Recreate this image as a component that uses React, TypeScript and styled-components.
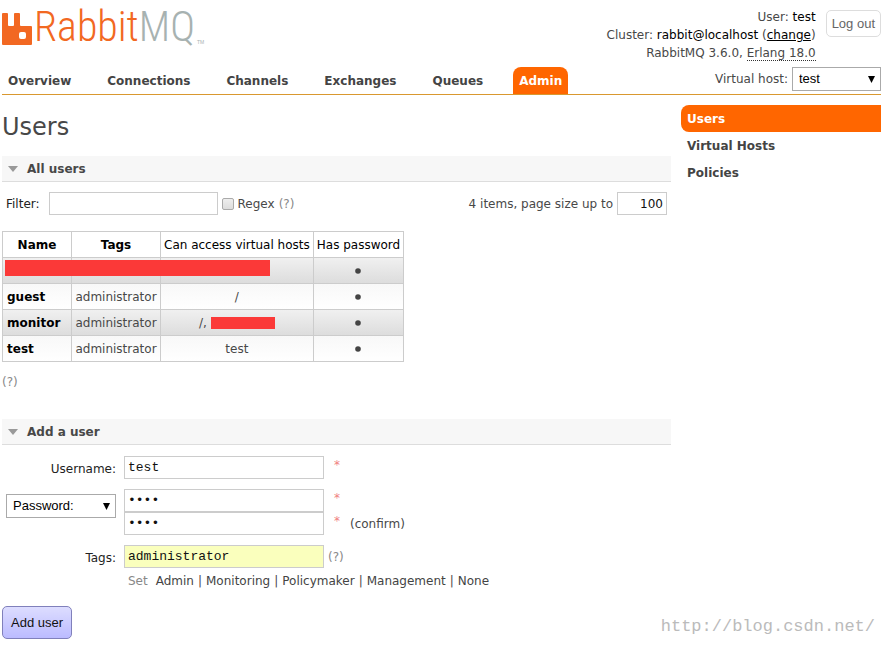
import React from "react";
import styled, { createGlobalStyle, css } from "styled-components";

const GlobalStyle = createGlobalStyle`
  * { box-sizing: border-box; }
  body {
    margin: 0;
    background: #fff;
    color: #484848;
    font: 12px/18px Verdana, "DejaVu Sans", sans-serif;
  }
  a { color: #444; text-decoration: none; }
`;

const Page = styled.div`
  position: relative;
  padding: 0 4px 8px 2px;
`;

const Header = styled.header`
  display: flex;
  justify-content: space-between;
  align-items: flex-end;
  border-bottom: 1px solid #d9982f;
`;

const Brand = styled.div`
  display: flex;
  flex-direction: column;
  gap: 16px;
`;

const Logo = styled.a`
  display: flex;
  align-items: flex-start;
`;

const Mark = styled.svg`
  display: block;
  width: 30px;
  height: 32px;
  margin: 13px 2px 0 0;
`;

const Wordmark = styled.span`
  margin-top: 3px;
  font: 300 42px/48px "Roboto Condensed", Roboto, sans-serif;
  color: #f26822;
`;

const WordmarkTail = styled.span`
  color: #a7b2b1;
`;

const TradeMark = styled.span`
  font: 5px/8px "Liberation Sans", sans-serif;
  color: #a7b2b1;
  margin: 38px 0 0 2px;
`;

const Tabs = styled.nav`
  display: flex;
  gap: 24px;
`;

const Tab = styled.a<{ $active?: boolean }>`
  padding: 5px 6px 4px;
  font-weight: bold;
  border-radius: 8px 8px 0 0;
  ${(p) => p.$active && css`
    background: #f60;
    color: #fff;
  `}
`;

const Session = styled.div`
  display: flex;
  flex-direction: column;
  align-items: flex-end;
  gap: 5px;
  padding: 8px 0 3px;
`;

const SessionTop = styled.div`
  display: flex;
  align-items: flex-start;
  gap: 10px;
`;

const Facts = styled.div`
  text-align: right;
`;

const Strong = styled.span`
  color: #000;
`;

const ChangeLink = styled.a`
  color: #000;
  text-decoration: underline;
`;

const Version = styled.abbr`
  text-decoration: none;
  border-bottom: 1px dotted #333;
`;

const LogOut = styled.button`
  margin-top: 2px;
  height: 27px;
  padding: 0 5px;
  border: 1px solid #ddd;
  border-radius: 5px;
  background: #fff;
  color: #666;
  font: 13px/18px "Liberation Sans", Arial, sans-serif;
`;

const HostRow = styled.label`
  display: flex;
  align-items: center;
  gap: 4px;
`;

const SelectBox = styled.span<{ $width: number }>`
  display: grid;
  align-items: center;
  width: ${(p) => p.$width}px;
`;

const Select = styled.select`
  grid-area: 1 / 1;
  appearance: none;
  width: 100%;
  height: 24px;
  padding: 0 6px;
  border: 1px solid #aaa;
  border-radius: 0;
  background: #fff;
  color: #000;
  font: 13px/18px "Liberation Sans", Arial, sans-serif;
`;

const Arrow = styled.svg`
  grid-area: 1 / 1;
  justify-self: end;
  margin-right: 6px;
  width: 7px;
  height: 7px;
  pointer-events: none;
`;

const Body = styled.div`
  display: flex;
  align-items: flex-start;
  gap: 10px;
`;

const Main = styled.main`
  flex: 1;
  min-width: 0;
`;

const Side = styled.nav`
  display: flex;
  flex-direction: column;
  width: 200px;
  margin-top: 10px;
`;

const SideLink = styled.a<{ $active?: boolean }>`
  padding: 5px 6px 4px;
  font-weight: bold;
  border-radius: 8px 0 0 8px;
  ${(p) => p.$active && css`
    background: #f60;
    color: #fff;
  `}
`;

const Title = styled.h1`
  margin: 18px 0 14px;
  font-size: 24px;
  line-height: 29px;
  font-weight: normal;
`;

const SectionTitle = styled.h2`
  display: flex;
  align-items: center;
  gap: 9px;
  margin: 0;
  padding: 4px 6px 3px;
  background: #f7f7f7;
  border-bottom: 1px solid #ddd;
  font-size: 12px;
  line-height: 18px;
`;

const Caret = styled.svg`
  width: 10px;
  height: 6px;
`;

const FilterBar = styled.div`
  display: flex;
  align-items: center;
  padding: 10px 4px 16px;
`;

const FilterLabel = styled.label`
  display: flex;
  align-items: center;
  gap: 9px;
  color: #222;
`;

const field = css`
  height: 23px;
  padding: 2px 3px;
  border: 1px solid #ccc;
  border-radius: 0;
  background: #fff;
  color: #111;
`;

const FilterInput = styled.input`
  ${field}
  width: 169px;
  font: 13px/16px "Liberation Mono", monospace;
`;

const RegexLabel = styled.label`
  display: flex;
  align-items: center;
  gap: 4px;
  margin: 0 4px;
`;

const Check = styled.input`
  appearance: none;
  width: 12px;
  height: 12px;
  margin: 0;
  border: 1px solid #aaa;
  border-radius: 2px;
  background: linear-gradient(#eee, #ddd);
`;

const Help = styled.span`
  color: #888;
`;

const PageSize = styled.label`
  display: flex;
  align-items: center;
  gap: 4px;
  margin-left: auto;
`;

const SizeInput = styled.input`
  ${field}
  width: 50px;
  text-align: right;
  font: 12px/16px Verdana, "DejaVu Sans", sans-serif;
`;

const Table = styled.table`
  border-collapse: collapse;
  margin-bottom: 11px;
`;

const Row = styled.tr<{ $shaded?: boolean }>`
  background: ${(p) =>
    p.$shaded
      ? "linear-gradient(#f0f0f0, #dcdcdc)"
      : "linear-gradient(#f8f8f8, #fff)"};
`;

const Heading = styled.th<{ $plain?: boolean; $min?: number }>`
  min-width: ${(p) => p.$min ?? 0}px;
  padding: 4px 3px 3px;
  border: 1px solid #ccc;
  color: #000;
  font-weight: ${(p) => (p.$plain ? "normal" : "bold")};
`;

const Cell = styled.td<{ $left?: boolean }>`
  height: 26px;
  padding: 4px 3px 3px;
  border: 1px solid #ccc;
  text-align: center;
  ${(p) => p.$left && css`
    padding-left: 4px;
    text-align: left;
  `}
`;

const NameLink = styled.a`
  color: #000;
  font-weight: bold;
`;

const RowBlock = styled.span`
  position: absolute;
  left: 2px;
  top: 2px;
  width: 265px;
  height: 16px;
  background: #fb3938;
`;

const RedactedCell = styled(Cell)`
  position: relative;
`;

const InlineBlock = styled.span`
  display: inline-block;
  width: 64px;
  height: 12px;
  vertical-align: -2px;
  background: #fb3938;
`;

const Dot = styled.svg`
  width: 6px;
  height: 6px;
  vertical-align: 1px;
`;

const AddSection = styled.section`
  margin-top: 28px;
`;

const Form = styled.form`
  padding-top: 11px;
`;

const Fields = styled.div`
  display: grid;
  grid-template-columns: 110px auto;
  justify-content: start;
  column-gap: 8px;
  row-gap: 10px;
  padding-left: 4px;
`;

const FieldLabel = styled.label`
  padding-top: 4px;
  text-align: right;
  color: #222;
`;

const PasswordKind = styled.div`
  padding-top: 5px;
`;

const Line = styled.div`
  display: flex;
  align-items: center;
`;

const TextInput = styled.input<{ $filled?: boolean }>`
  ${field}
  width: 200px;
  background: ${(p) => (p.$filled ? "#faffbd" : "#fff")};
  font: 13px/16px "Liberation Mono", monospace;
`;

const Required = styled.span`
  align-self: flex-start;
  width: 26px;
  padding-left: 10px;
  color: #f08080;
`;

const TagHelp = styled(Help)`
  padding-left: 4px;
`;

const SetRow = styled.div`
  display: flex;
  gap: 4px;
  padding: 4px 0 0 4px;
`;

const SetLabel = styled.span`
  margin-right: 4px;
  color: #888;
`;

const AddButton = styled.button`
  margin-top: 16px;
  height: 33px;
  padding: 0 8px;
  border: 1px solid #8080bb;
  border-radius: 5px;
  background: linear-gradient(#ddf, #bbf);
  color: #111;
  font: 13px/18px "Liberation Sans", Arial, sans-serif;
`;

const Watermark = styled.div`
  position: absolute;
  right: 10px;
  bottom: 8px;
  font: 17px/24px "Liberation Mono", monospace;
  color: #bbb;
`;

const tabs = ["Overview", "Connections", "Channels", "Exchanges", "Queues", "Admin"];
const sideLinks = ["Users", "Virtual Hosts", "Policies"];
const tagPresets = ["Admin", "Monitoring", "Policymaker", "Management", "None"];
const users = [
  { name: "guest", hosts: "/" },
  { name: "monitor", hosts: "/, ", hidden: true },
  { name: "test", hosts: "test" },
];

function DropDown({ value, width, label }: { value: string; width: number; label?: string }) {
  return (
    <SelectBox $width={width}>
      <Select defaultValue={value} aria-label={label}>
        <option>{value}</option>
      </Select>
      <Arrow viewBox="0 0 7 7" aria-hidden="true">
        <path d="M0 0H7L3.5 7Z" fill="#000" />
      </Arrow>
    </SelectBox>
  );
}

function PasswordDot() {
  return (
    <Dot viewBox="0 0 6 6" role="img" aria-label="Yes">
      <circle cx="3" cy="3" r="2.8" fill="#444" />
    </Dot>
  );
}

function Section({ children }: { children: React.ReactNode }) {
  return (
    <SectionTitle>
      <Caret viewBox="0 0 10 6" aria-hidden="true">
        <path d="M0 0H10L5 6Z" fill="#999" />
      </Caret>
      {children}
    </SectionTitle>
  );
}

export default function App() {
  return (
    <Page>
      <GlobalStyle />
      <Header>
        <Brand>
          <Logo href="#" aria-label="RabbitMQ">
            <Mark viewBox="0 0 30 32" aria-hidden="true">
              <path
                fill="#f26822"
                fillRule="evenodd"
                d="M1 0H5Q6 0 6 1V12Q6 13 7 13H11Q12 13 12 12V1Q12 0 13 0H17Q18 0 18 1V12Q18 13 19 13H29Q30 13 30 14V31Q30 32 29 32H1Q0 32 0 31V1Q0 0 1 0ZM19 19Q17 19 17 21V24Q17 26 19 26H22Q24 26 24 24V21Q24 19 22 19Z"
              />
            </Mark>
            <Wordmark>
              Rabbit<WordmarkTail>MQ</WordmarkTail>
            </Wordmark>
            <TradeMark>TM</TradeMark>
          </Logo>
          <Tabs>
            {tabs.map((t) => (
              <Tab key={t} href="#" $active={t === "Admin"}>{t}</Tab>
            ))}
          </Tabs>
        </Brand>
        <Session>
          <SessionTop>
            <Facts>
              <div>User: <Strong>test</Strong></div>
              <div>
                Cluster: <Strong>rabbit@localhost</Strong> (<ChangeLink href="#">change</ChangeLink>)
              </div>
              <div>RabbitMQ 3.6.0, <Version>Erlang 18.0</Version></div>
            </Facts>
            <LogOut type="button">Log out</LogOut>
          </SessionTop>
          <HostRow>
            Virtual host: <DropDown value="test" width={89} />
          </HostRow>
        </Session>
      </Header>

      <Body>
        <Main>
          <Title>Users</Title>
          <section>
            <Section>All users</Section>
            <FilterBar>
              <FilterLabel>
                Filter: <FilterInput type="text" />
              </FilterLabel>
              <RegexLabel>
                <Check type="checkbox" /> Regex
              </RegexLabel>
              <Help>(?)</Help>
              <PageSize>
                4 items, page size up to <SizeInput type="text" defaultValue="100" />
              </PageSize>
            </FilterBar>
            <Table>
              <thead>
                <tr>
                  <Heading $min={69}>Name</Heading>
                  <Heading $min={89}>Tags</Heading>
                  <Heading $plain>Can access virtual hosts</Heading>
                  <Heading $plain>Has password</Heading>
                </tr>
              </thead>
              <tbody>
                <Row $shaded>
                  <RedactedCell><RowBlock /></RedactedCell>
                  <Cell />
                  <Cell />
                  <Cell><PasswordDot /></Cell>
                </Row>
                {users.map((u) => (
                  <Row key={u.name} $shaded={u.hidden}>
                    <Cell $left><NameLink href="#">{u.name}</NameLink></Cell>
                    <Cell>administrator</Cell>
                    <Cell>{u.hosts}{u.hidden && <InlineBlock />}</Cell>
                    <Cell><PasswordDot /></Cell>
                  </Row>
                ))}
              </tbody>
            </Table>
            <Help>(?)</Help>
          </section>

          <AddSection>
            <Section>Add a user</Section>
            <Form onSubmit={(e) => e.preventDefault()}>
              <Fields>
                <FieldLabel htmlFor="username">Username:</FieldLabel>
                <Line>
                  <TextInput id="username" type="text" defaultValue="test" />
                  <Required>*</Required>
                </Line>
                <PasswordKind>
                  <DropDown value="Password:" width={110} label="Credential type" />
                </PasswordKind>
                <div>
                  <Line>
                    <TextInput type="password" defaultValue="test" aria-label="Password" />
                    <Required>*</Required>
                  </Line>
                  <Line>
                    <TextInput type="password" defaultValue="test" aria-label="Confirm password" />
                    <Required>*</Required>
                    (confirm)
                  </Line>
                </div>
                <FieldLabel htmlFor="tags">Tags:</FieldLabel>
                <div>
                  <Line>
                    <TextInput id="tags" type="text" $filled defaultValue="administrator" />
                    <TagHelp>(?)</TagHelp>
                  </Line>
                  <SetRow>
                    <SetLabel>Set</SetLabel>
                    {tagPresets.map((t, i) => (
                      <React.Fragment key={t}>
                        {i > 0 && <span>|</span>}
                        <a href="#">{t}</a>
                      </React.Fragment>
                    ))}
                  </SetRow>
                </div>
              </Fields>
              <AddButton type="submit">Add user</AddButton>
            </Form>
          </AddSection>
        </Main>
        <Side>
          {sideLinks.map((t) => (
            <SideLink key={t} href="#" $active={t === "Users"}>{t}</SideLink>
          ))}
        </Side>
      </Body>
      <Watermark>http://blog.csdn.net/</Watermark>
    </Page>
  );
}
